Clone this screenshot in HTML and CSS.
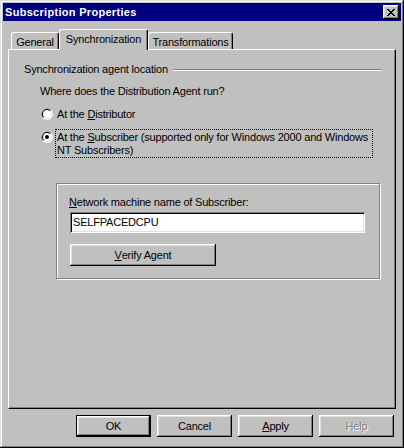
FILE: index.html
```html
<!DOCTYPE html>
<html lang="en">
<head>
  <meta charset="UTF-8" />
  <title>Subscription Properties</title>
  <link rel="stylesheet" href="styles.css">
</head>
<body>
  <div class="window">
    <div class="titlebar">
      <span class="title">Subscription Properties</span>
      <div class="close">
        <svg width="8" height="7" viewBox="0 0 8 7">
          <path d="M0 0h2v1h-2zM1 1h2v1h-2zM2 2h4v1h-4zM3 3h2v1h-2zM2 4h4v1h-4zM1 5h2v1h-2zM0 6h2v1h-2zM6 0h2v1h-2zM5 1h2v1h-2zM5 5h2v1h-2zM6 6h2v1h-2z" fill="#000"/>
        </svg>
      </div>
    </div>

    <!-- Tab strip -->
    <div class="tabs">
      <div class="tab tab-general">General</div>
      <div class="tab tab-sync active">Synchronization</div>
      <div class="tab tab-trans">Transformations</div>
    </div>

    <div class="panel">
      <div class="group-title">
        <span>Synchronization agent location</span>
        <span class="rule"></span>
      </div>

      <div class="group-body">
        <div class="question">Where does the Distribution Agent run?</div>

        <div class="radio first">
          <svg class="radio-dot" width="12" height="12" viewBox="0 0 12 12">
            <circle cx="6" cy="6" r="6" fill="#fff"/>
            <path d="M1.76 10.24 A6 6 0 0 1 10.24 1.76 Z" fill="#808080"/>
            <circle cx="6" cy="6" r="5" fill="#dfdfdf"/>
            <path d="M2.46 9.54 A5 5 0 0 1 9.54 2.46 Z" fill="#000"/>
            <circle cx="6" cy="6" r="4" fill="#fff"/>
          </svg>
          <span class="label">At the <u>D</u>istributor</span>
        </div>

        <div class="radio second">
          <svg class="radio-dot" width="12" height="12" viewBox="0 0 12 12">
            <circle cx="6" cy="6" r="6" fill="#fff"/>
            <path d="M1.76 10.24 A6 6 0 0 1 10.24 1.76 Z" fill="#808080"/>
            <circle cx="6" cy="6" r="5" fill="#dfdfdf"/>
            <path d="M2.46 9.54 A5 5 0 0 1 9.54 2.46 Z" fill="#000"/>
            <circle cx="6" cy="6" r="4" fill="#fff"/>
            <circle cx="6" cy="6" r="2" fill="#000"/>
          </svg>
          <span class="label focus">At the <u>S</u>ubscriber (supported only for Windows 2000 and Windows<br>NT Subscribers)</span>
        </div>

        <div class="frame">
          <div class="field-label"><u>N</u>etwork machine name of Subscriber:</div>
          <div class="textbox">SELFPACEDCPU</div>
          <div class="btn verify"><u>V</u>erify Agent</div>
        </div>
      </div>
    </div>

    <div class="actions">
      <div class="btn default">OK</div>
      <div class="btn">Cancel</div>
      <div class="btn"><u>A</u>pply</div>
      <div class="btn disabled">Help</div>
    </div>
  </div>
</body>
</html>
```

FILE: styles.css
```css
body {
  margin: 0;
  font-family: "Liberation Sans", Arial, sans-serif;
  font-size: 11px;
  line-height: 13px;
  letter-spacing: -0.2px;
  color: #000;
}
.window {
  width: 404px;
  height: 448px;
  box-sizing: border-box;
  padding: 3px;
  background: #c0c0c0;
  box-shadow: inset -1px -1px #000, inset 1px 1px #dfdfdf, inset -2px -2px #808080, inset 2px 2px #fff;
}
.titlebar {
  height: 18px;
  background: #000080;
  display: flex;
  align-items: center;
  justify-content: space-between;
  padding: 0 2px 0 2px;
}
.title {
  color: #fff;
  font-weight: bold;
  font-size: 11px;
  letter-spacing: 0.3px;
}
.close {
  width: 16px;
  height: 14px;
  box-sizing: border-box;
  background: #c0c0c0;
  display: flex;
  align-items: center;
  justify-content: center;
  box-shadow: inset -1px -1px #000, inset 1px 1px #fff, inset -2px -2px #808080, inset 2px 2px #dfdfdf;
}
.close svg {
  margin-left: -1px;
}

/* tabs */
.tabs {
  display: flex;
  align-items: flex-end;
  height: 20px;
  margin: 8px 5px 0;
  padding-left: 3px;
}
.tab {
  box-sizing: border-box;
  height: 17px;
  padding-top: 3px;
  text-align: center;
  border-top: 1px solid #fff;
  border-left: 1px solid #fff;
  border-right: 1px solid #000;
  border-top-left-radius: 3px;
  border-top-right-radius: 3px;
  box-shadow: inset -1px 0 #808080;
}
.tab-general { width: 48px; }
.tab-sync { width: 89px; }
.tab-trans { width: 85px; }
.tab.active {
  height: 21px;
  margin-bottom: -1px;
  padding-top: 3px;
  position: relative;
  z-index: 1;
  background: #c0c0c0;
}

.panel {
  height: 360px;
  box-sizing: border-box;
  margin: 0 5px;
  padding: 13px 14px 0 15px;
  border-style: solid;
  border-width: 1px;
  border-color: #fff #000 #000 #fff;
  box-shadow: inset -1px -1px #808080;
}
.group-title {
  display: flex;
  align-items: center;
}
.rule {
  flex: 1;
  height: 0;
  margin-left: 5px;
  border-top: 1px solid #808080;
  border-bottom: 1px solid #fff;
}
.group-body {
  padding-left: 16px;
}
.question {
  margin-top: 9px;
}
.radio {
  display: flex;
  align-items: flex-start;
}
.radio.first {
  margin-top: 10px;
}
.radio.second {
  margin-top: 8px;
}
.radio-dot {
  flex: none;
  margin-left: 1px;
}
.radio.second .radio-dot {
  margin-top: 2px;
}
.label {
  margin-left: 4px;
}
.label.focus {
  margin-left: 2px;
  width: 318px;
  box-sizing: border-box;
  padding: 1px 1px 0;
  border: 1px dotted #000;
  white-space: nowrap;
}

.frame {
  width: 324px;
  height: 96px;
  box-sizing: border-box;
  margin: 25px 0 0 16px;
  padding: 12px 0 0 12px;
  border: 1px solid #808080;
  box-shadow: inset 1px 1px #fff, 1px 1px #fff;
}
.textbox {
  width: 295px;
  height: 21px;
  box-sizing: border-box;
  margin: 3px 0 0 1px;
  padding: 4px 3px 0;
  background: #fff;
  box-shadow: inset 1px 1px #808080, inset -1px -1px #fff, inset 2px 2px #000, inset -2px -2px #dfdfdf;
}
.btn {
  width: 75px;
  height: 22px;
  box-sizing: border-box;
  display: flex;
  align-items: center;
  justify-content: center;
  background: #c0c0c0;
  box-shadow: inset -1px -1px #000, inset 1px 1px #fff, inset -2px -2px #808080, inset 2px 2px #dfdfdf;
}
.btn.verify {
  width: 146px;
  margin: 11px 0 0 1px;
}
.btn.default {
  border: 1px solid #000;
}
.btn.disabled {
  color: #808080;
  text-shadow: 1px 1px #fff;
}
.actions {
  display: flex;
  justify-content: flex-end;
  gap: 6px;
  margin-top: 6px;
  padding-right: 7px;
}
```
